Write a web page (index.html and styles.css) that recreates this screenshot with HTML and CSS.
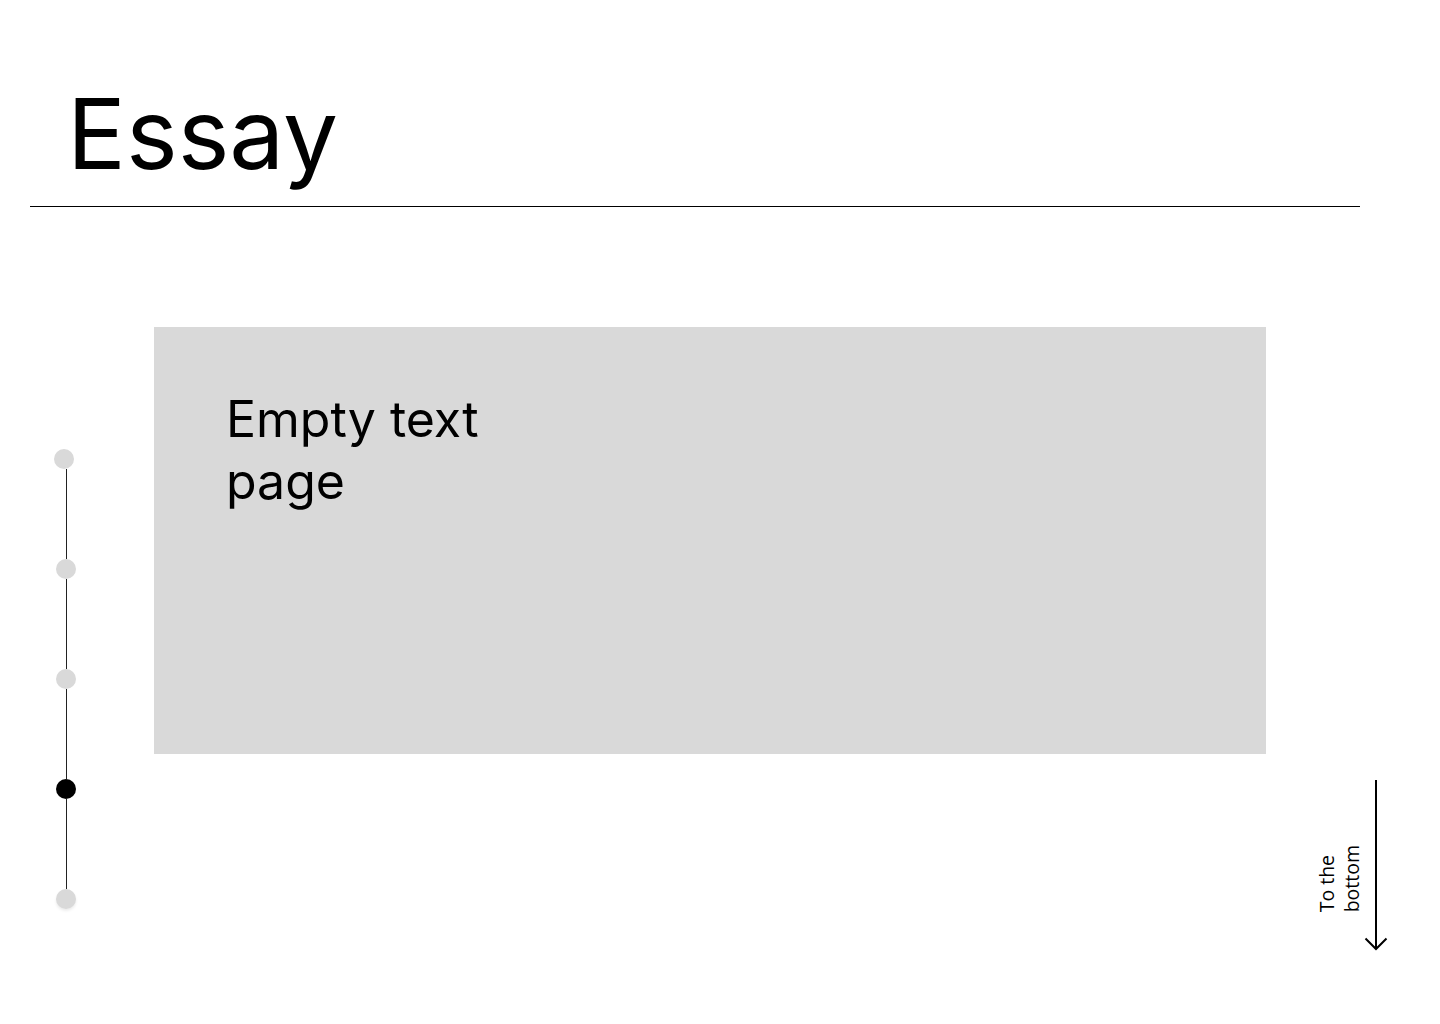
FILE: index.html
```html
<!DOCTYPE html>
<html lang="en">
<head>
<meta charset="utf-8">
<title>Essay</title>
<link rel="stylesheet" href="styles.css">
</head>
<body>
<header class="header">
  <h1 class="title">Essay</h1>
</header>
<main class="main">
  <nav class="timeline">
    <span class="dot first"></span>
    <span class="seg"></span>
    <span class="dot"></span>
    <span class="seg"></span>
    <span class="dot"></span>
    <span class="seg"></span>
    <span class="dot active"></span>
    <span class="seg"></span>
    <span class="dot last"></span>
  </nav>
  <section class="page">
    <p class="page-text">Empty text page</p>
  </section>
  <a class="to-bottom" href="#">
    <span class="to-bottom-label">To the<br>bottom</span>
    <svg class="arrow" width="24" height="172" viewBox="0 0 24 172" aria-hidden="true">
      <line x1="12" y1="0" x2="12" y2="169" stroke="#000" stroke-width="2"/>
      <polyline points="1.5,158.5 12,169 22.5,158.5" fill="none" stroke="#000" stroke-width="2"/>
    </svg>
  </a>
</main>
</body>
</html>
```
FILE: styles.css
```css
* { box-sizing: border-box; }
html, body { margin: 0; padding: 0; background: #fff; }
body {
  font-family: Inter, "Noto Sans", sans-serif;
  color: #000;
  width: 1440px;
  height: 1024px;
  overflow: hidden;
}
.header {
  margin: 0 80px 0 30px;
  border-bottom: 1px solid #000;
  height: 207px;
  padding: 74px 0 0 37px;
}
.title {
  margin: 0;
  font-size: 98px;
  font-weight: 400;
  line-height: 120px;
  letter-spacing: 0;
}
.main {
  display: grid;
  grid-template-columns: 154px 1112px 1fr;
  margin-top: 120px;
}
.timeline {
  display: flex;
  flex-direction: column;
  align-items: center;
  width: 20px;
  margin: 122px 0 0 56px;
}
.dot {
  width: 20px;
  height: 20px;
  border-radius: 50%;
  background: #d9d9d9;
  flex: none;
}
.dot.first { margin-left: -4px; }
.dot.active { background: #000; }
.dot.last { box-shadow: 0 2px 3px rgba(0,0,0,0.08); }
.seg {
  width: 1px;
  height: 90px;
  background: #222;
  flex: none;
}
.page {
  background: #d9d9d9;
  height: 427px;
  padding: 61px 0 0 72px;
}
.page-text {
  margin: 0;
  width: 290px;
  font-size: 50px;
  line-height: 62px;
  font-weight: 400;
}
.to-bottom {
  display: flex;
  align-items: flex-end;
  margin: 453px 0 0 48px;
  color: #000;
  text-decoration: none;
}
.to-bottom-label {
  writing-mode: vertical-rl;
  transform: rotate(180deg);
  font-family: "Open Sans", "Noto Sans", sans-serif;
  font-size: 19.5px;
  line-height: 25px;
  margin-bottom: 40px;
  text-align: left;
}
.arrow { display: block; margin-left: 0; }
```
